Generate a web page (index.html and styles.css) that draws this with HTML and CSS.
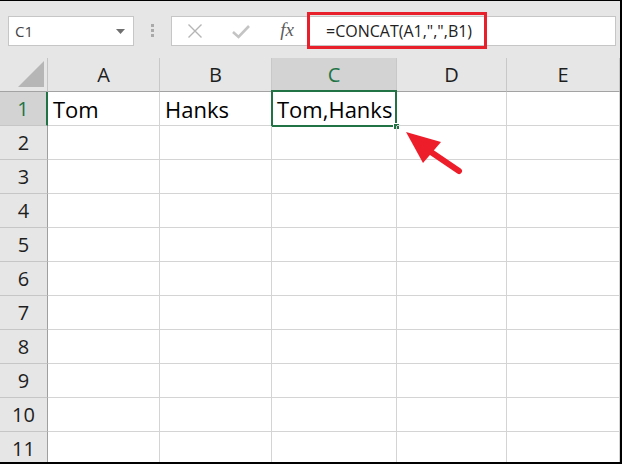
FILE: index.html
```html
<!DOCTYPE html>
<html>
<head>
<meta charset="utf-8">
<link rel="stylesheet" href="styles.css">
</head>
<body>
<div class="frame">
  <div class="toolbar">
    <div class="namebox">
      <span class="nb-text">C1</span>
      <svg class="nb-arrow" width="9" height="5" viewBox="0 0 9 5"><polygon points="0,0 9,0 4.5,5" fill="#6f6f6f"/></svg>
    </div>
    <div class="grip"><i></i><i></i><i></i></div>
    <div class="fbar">
      <span class="ficon">
        <svg width="16" height="16" viewBox="0 0 16 16"><path d="M1.5 1.5 L14.5 14.5 M14.5 1.5 L1.5 14.5" stroke="#b5b5b5" stroke-width="1.4" fill="none"/></svg>
      </span>
      <span class="ficon">
        <svg width="20" height="16" viewBox="0 0 20 16"><path d="M2 9 L7.5 14 L18 3" stroke="#c4c4c4" stroke-width="2.6" fill="none"/></svg>
      </span>
      <span class="ficon fx">fx</span>
      <span class="ftext">=CONCAT(A1,",",B1)</span>
      <div class="redbox"></div>
    </div>
  </div>
  <div class="sheet">
    <div class="corner"><svg width="26" height="26" viewBox="0 0 26 26"><polygon points="0,26 26,26 26,0" fill="#b6b6b6"/></svg></div>
    <div class="ch">A</div><div class="ch">B</div><div class="ch ch-sel">C</div><div class="ch">D</div><div class="ch">E</div>

    <div class="rh rh-sel">1</div><div class="cell">Tom</div><div class="cell">Hanks</div><div class="cell active">Tom,Hanks<span class="sel"><span class="handle"></span></span></div><div class="cell"></div><div class="cell"></div>
    <div class="rh">2</div><div class="cell"></div><div class="cell"></div><div class="cell"></div><div class="cell"></div><div class="cell"></div>
    <div class="rh">3</div><div class="cell"></div><div class="cell"></div><div class="cell"></div><div class="cell"></div><div class="cell"></div>
    <div class="rh">4</div><div class="cell"></div><div class="cell"></div><div class="cell"></div><div class="cell"></div><div class="cell"></div>
    <div class="rh">5</div><div class="cell"></div><div class="cell"></div><div class="cell"></div><div class="cell"></div><div class="cell"></div>
    <div class="rh">6</div><div class="cell"></div><div class="cell"></div><div class="cell"></div><div class="cell"></div><div class="cell"></div>
    <div class="rh">7</div><div class="cell"></div><div class="cell"></div><div class="cell"></div><div class="cell"></div><div class="cell"></div>
    <div class="rh">8</div><div class="cell"></div><div class="cell"></div><div class="cell"></div><div class="cell"></div><div class="cell"></div>
    <div class="rh">9</div><div class="cell"></div><div class="cell"></div><div class="cell"></div><div class="cell"></div><div class="cell"></div>
    <div class="rh">10</div><div class="cell"></div><div class="cell"></div><div class="cell"></div><div class="cell"></div><div class="cell"></div>
    <div class="rh">11</div><div class="cell"></div><div class="cell"></div><div class="cell"></div><div class="cell"></div><div class="cell"></div>
  </div>
  <svg class="arrow" width="622" height="464" viewBox="0 0 622 464">
    <line x1="428" y1="150" x2="459" y2="171" stroke="#ee1d2a" stroke-width="6" stroke-linecap="round"/>
    <polygon points="406,132 441,142 423,163" fill="#ee1d2a"/>
  </svg>
</div>
</body>
</html>
```

FILE: styles.css
```css
html, body {
  margin: 0;
  padding: 0;
  background: #ffffff;
}

.frame {
  position: relative;
  width: 622px;
  height: 464px;
  box-sizing: border-box;
  border-top: 1px solid #000;
  border-right: 2px solid #000;
  border-bottom: 2px solid #000;
  overflow: hidden;
  background: #e6e6e6;
  font-family: "Open Sans", "Noto Sans", sans-serif;
}

.toolbar {
  height: 57px;
  display: flex;
  align-items: flex-start;
  background: #e6e6e6;
}

.namebox {
  margin-top: 15px;
  margin-left: 8px;
  width: 126px;
  height: 30px;
  box-sizing: border-box;
  border: 1px solid #c6c6c6;
  background: #fff;
  display: flex;
  align-items: center;
  justify-content: space-between;
  padding: 0 8px 0 6px;
}

.nb-text {
  font-size: 15px;
  color: #444;
}

.nb-arrow {
  display: block;
}

.grip {
  margin-top: 23px;
  width: 37px;
  display: flex;
  flex-direction: column;
  align-items: center;
  gap: 2px;
}

.grip i {
  display: block;
  width: 3px;
  height: 3px;
  background: #a9a9a9;
}

.fbar {
  position: relative;
  margin-top: 15px;
  width: 445px;
  height: 30px;
  box-sizing: border-box;
  border: 1px solid #c6c6c6;
  background: #fff;
  display: flex;
  align-items: center;
}

.ficon {
  width: 46px;
  height: 28px;
  display: flex;
  align-items: center;
  justify-content: center;
}

.ficon svg {
  display: block;
}

.fx {
  font-family: "Liberation Serif", "DejaVu Serif", serif;
  font-style: italic;
  font-size: 19px;
  color: #5c5c5c;
  padding-bottom: 2px;
  box-sizing: border-box;
}

.ftext {
  padding-left: 16px;
  font-size: 16px;
  color: #222;
  white-space: nowrap;
}

.redbox {
  position: absolute;
  left: 135px;
  top: -5px;
  width: 180px;
  height: 37px;
  box-sizing: border-box;
  border: 3px solid #e8202b;
}

.sheet {
  display: grid;
  grid-template-columns: 48px 112px 112px 125px 110px 113px;
  grid-auto-rows: 34px;
  background: #fff;
}

.corner {
  background: #e6e6e6;
  box-sizing: border-box;
  border-right: 1px solid #c4c4c4;
  border-bottom: 1px solid #a3a3a3;
  display: flex;
  align-items: flex-end;
  justify-content: flex-end;
  padding: 0 3px 4px 0;
}

.corner svg {
  display: block;
}

.ch {
  background: #e6e6e6;
  box-sizing: border-box;
  border-right: 1px solid #c8c8c8;
  border-bottom: 1px solid #a3a3a3;
  display: flex;
  align-items: center;
  justify-content: center;
  font-size: 20px;
  color: #1e1e1e;
}

.ch-sel {
  background: #d3d3d3;
  color: #217346;
}

.rh {
  background: #e6e6e6;
  box-sizing: border-box;
  border-right: 1px solid #9f9f9f;
  border-bottom: 1px solid #c6c6c6;
  display: flex;
  align-items: center;
  justify-content: center;
  font-size: 20px;
  color: #1e1e1e;
}

.rh-sel {
  background: #d3d3d3;
  color: #217346;
  border-right: 2px solid #217346;
}

.cell {
  position: relative;
  box-sizing: border-box;
  border-right: 1px solid #d4d4d4;
  border-bottom: 1px solid #d4d4d4;
  display: flex;
  align-items: center;
  padding-left: 5px;
  font-size: 22px;
  color: #000;
  white-space: nowrap;
}

.sel {
  position: absolute;
  left: -1px;
  top: -2px;
  width: 126px;
  height: 37px;
  box-sizing: border-box;
  border: 2px solid #217346;
}

.handle {
  position: absolute;
  right: -5px;
  bottom: -5px;
  width: 7px;
  height: 7px;
  box-sizing: border-box;
  background: #217346;
  border: 1px solid #fff;
}

.arrow {
  position: absolute;
  left: 0;
  top: -1px;
  pointer-events: none;
}
```
